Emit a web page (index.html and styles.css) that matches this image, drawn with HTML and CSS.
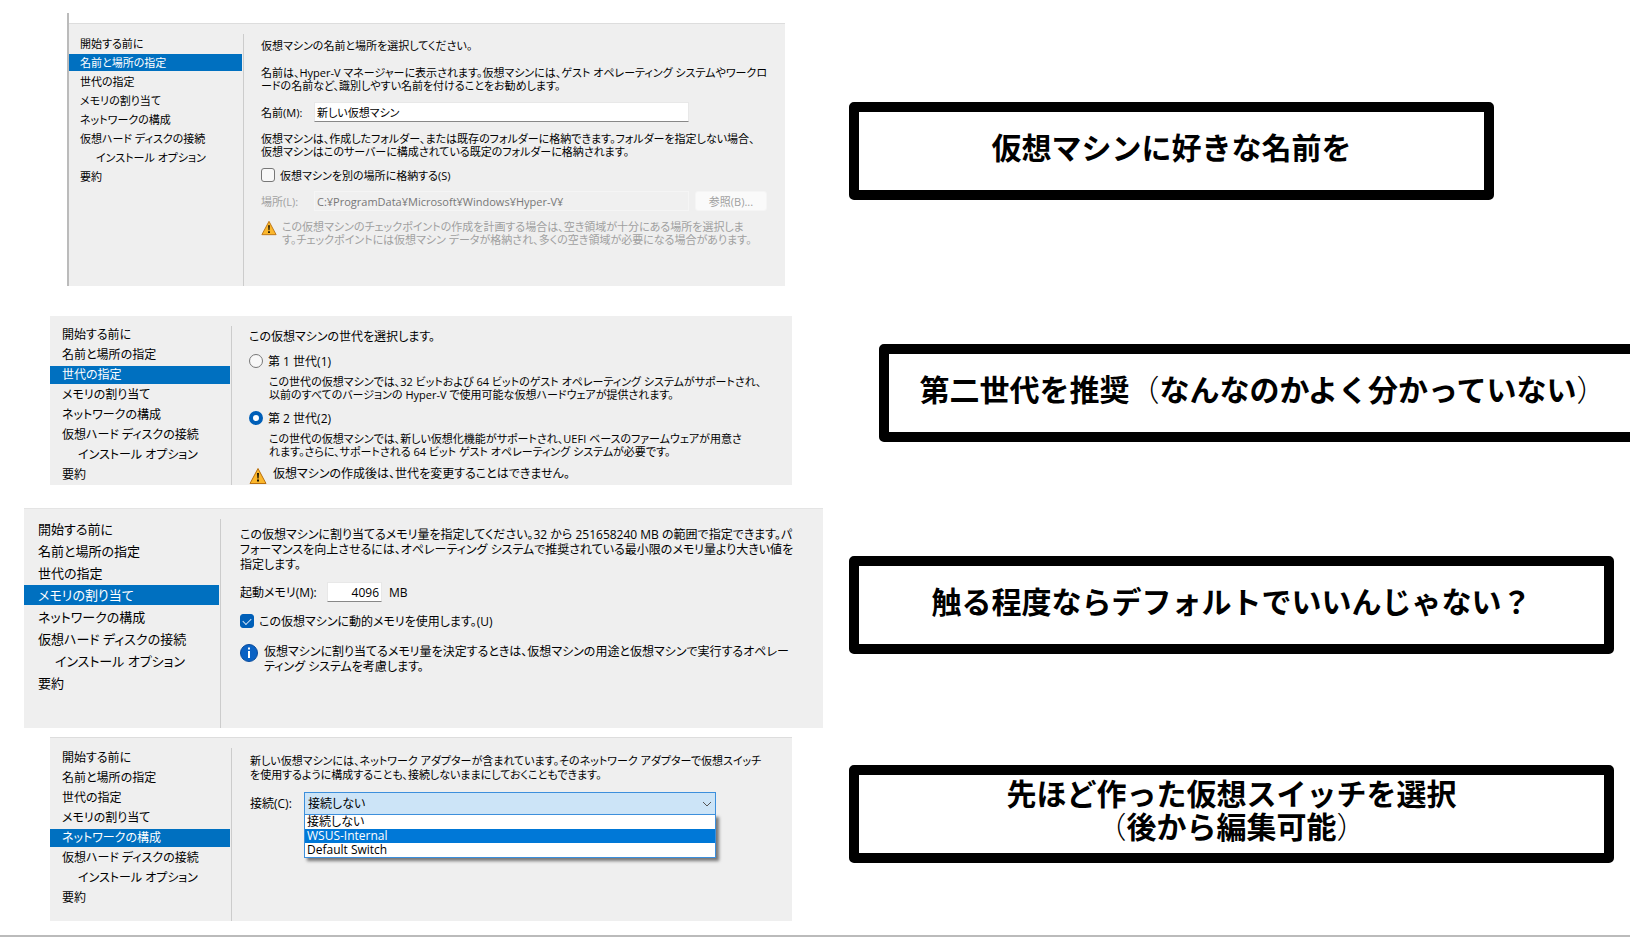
FILE: index.html
```html
<!DOCTYPE html>
<html lang="ja">
<head>
    <meta charset="UTF-8">
    <meta name="viewport" content="width=device-width, initial-scale=1.0">
    <title>仮想マシンの作成</title>
    <link rel="stylesheet" href="styles.css">
</head>
<body>
    <main class="slide">
        <!-- 名前と場所 -->
        <section class="step step-name">
            <div class="panel">
                <div class="panel-head"></div>
                <div class="wizard">
                    <nav class="nav">
                        <a href="#">開始する前に</a>
                        <a href="#" class="active">名前と場所の指定</a>
                        <a href="#">世代の指定</a>
                        <a href="#">メモリの割り当て</a>
                        <a href="#">ネットワークの構成</a>
                        <a href="#">仮想ハード ディスクの接続</a>
                        <a href="#" class="sub">インストール オプション</a>
                        <a href="#">要約</a>
                    </nav>
                    <div class="content">
                        <p>仮想マシンの名前と場所を選択してください。</p>
                        <p class="intro">名前は、Hyper-V マネージャーに表示されます。仮想マシンには、ゲスト オペレーティング システムやワークロ<br>ードの名前など、識別しやすい名前を付けることをお勧めします。</p>
                        <div class="field">
                            <label for="vmName">名前(M):</label>
                            <input type="text" id="vmName" class="text" value="新しい仮想マシン">
                        </div>
                        <p class="note">仮想マシンは、作成したフォルダー、または既存のフォルダーに格納できます。フォルダーを指定しない場合、<br>仮想マシンはこのサーバーに構成されている既定のフォルダーに格納されます。</p>
                        <div class="choice">
                            <input type="checkbox" id="otherPlace" class="check">
                            <label for="otherPlace">仮想マシンを別の場所に格納する(S)</label>
                        </div>
                        <div class="field disabled">
                            <label for="place">場所(L):</label>
                            <input type="text" id="place" class="text" value="C:¥ProgramData¥Microsoft¥Windows¥Hyper-V¥" disabled>
                            <button type="button" class="browse" disabled>参照(B)...</button>
                        </div>
                        <div class="message disabled">
                            <svg class="icon" viewBox="0 0 18 18" aria-hidden="true"><path d="M9 1.5 17 16.5H1z" fill="#fbb72c" stroke="#b9700f" stroke-linejoin="round"/><path d="M8 6h2l-.4 5.5H8.4zM8 12.6h2v2H8z" fill="#1c1400"/></svg>
                            <p>この仮想マシンのチェックポイントの作成を計画する場合は、空き領域が十分にある場所を選択しま<br>す。チェックポイントには仮想マシン データが格納され、多くの空き領域が必要になる場合があります。</p>
                        </div>
                    </div>
                </div>
            </div>
            <div class="callout">仮想マシンに好きな名前を</div>
        </section>

        <!-- 世代 -->
        <section class="step step-generation">
            <div class="panel">
                <div class="wizard">
                    <nav class="nav">
                        <a href="#">開始する前に</a>
                        <a href="#">名前と場所の指定</a>
                        <a href="#" class="active">世代の指定</a>
                        <a href="#">メモリの割り当て</a>
                        <a href="#">ネットワークの構成</a>
                        <a href="#">仮想ハード ディスクの接続</a>
                        <a href="#" class="sub">インストール オプション</a>
                        <a href="#">要約</a>
                    </nav>
                    <div class="content">
                        <p>この仮想マシンの世代を選択します。</p>
                        <div class="choice">
                            <input type="radio" name="generation" id="gen1" class="radio">
                            <label for="gen1">第 1 世代(1)</label>
                        </div>
                        <p class="detail">この世代の仮想マシンでは、32 ビットおよび 64 ビットのゲスト オペレーティング システムがサポートされ、<br>以前のすべてのバージョンの Hyper-V で使用可能な仮想ハードウェアが提供されます。</p>
                        <div class="choice">
                            <input type="radio" name="generation" id="gen2" class="radio" checked>
                            <label for="gen2">第 2 世代(2)</label>
                        </div>
                        <p class="detail">この世代の仮想マシンでは、新しい仮想化機能がサポートされ、UEFI ベースのファームウェアが用意さ<br>れます。さらに、サポートされる 64 ビット ゲスト オペレーティング システムが必要です。</p>
                        <div class="message">
                            <svg class="icon" viewBox="0 0 18 18" aria-hidden="true"><path d="M9 1.5 17 16.5H1z" fill="#fbb72c" stroke="#b9700f" stroke-linejoin="round"/><path d="M8 6h2l-.4 5.5H8.4zM8 12.6h2v2H8z" fill="#1c1400"/></svg>
                            <p>仮想マシンの作成後は、世代を変更することはできません。</p>
                        </div>
                    </div>
                </div>
            </div>
            <div class="callout">第二世代を推奨<span class="thin">（</span>なんなのかよく分かっていない<span class="thin">）</span></div>
        </section>

        <!-- メモリ -->
        <section class="step step-memory">
            <div class="panel">
                <div class="wizard">
                    <nav class="nav">
                        <a href="#">開始する前に</a>
                        <a href="#">名前と場所の指定</a>
                        <a href="#">世代の指定</a>
                        <a href="#" class="active">メモリの割り当て</a>
                        <a href="#">ネットワークの構成</a>
                        <a href="#">仮想ハード ディスクの接続</a>
                        <a href="#" class="sub">インストール オプション</a>
                        <a href="#">要約</a>
                    </nav>
                    <div class="content">
                        <p>この仮想マシンに割り当てるメモリ量を指定してください。32 から 251658240 MB の範囲で指定できます。パ<br>フォーマンスを向上させるには、オペレーティング システムで推奨されている最小限のメモリ量より大きい値を<br>指定します。</p>
                        <div class="field">
                            <label for="memory">起動メモリ(M):</label>
                            <input type="text" id="memory" class="text" value="4096">
                            <span>MB</span>
                        </div>
                        <div class="choice">
                            <input type="checkbox" id="dynamic" class="check" checked>
                            <label for="dynamic">この仮想マシンに動的メモリを使用します。(U)</label>
                        </div>
                        <div class="message">
                            <svg class="icon" viewBox="0 0 18 18" aria-hidden="true"><circle cx="9" cy="9" r="8.5" fill="#0a62c4" stroke="#0a4c9c"/><path d="M8 3.5h2v2H8zM8 7h2v7H8z" fill="#fff"/></svg>
                            <p>仮想マシンに割り当てるメモリ量を決定するときは、仮想マシンの用途と仮想マシンで実行するオペレー<br>ティング システムを考慮します。</p>
                        </div>
                    </div>
                </div>
            </div>
            <div class="callout">触る程度ならデフォルトでいいんじゃない？</div>
        </section>

        <!-- ネットワーク -->
        <section class="step step-network">
            <div class="panel">
                <div class="wizard">
                    <nav class="nav">
                        <a href="#">開始する前に</a>
                        <a href="#">名前と場所の指定</a>
                        <a href="#">世代の指定</a>
                        <a href="#">メモリの割り当て</a>
                        <a href="#" class="active">ネットワークの構成</a>
                        <a href="#">仮想ハード ディスクの接続</a>
                        <a href="#" class="sub">インストール オプション</a>
                        <a href="#">要約</a>
                    </nav>
                    <div class="content">
                        <p>新しい仮想マシンには、ネットワーク アダプターが含まれています。そのネットワーク アダプターで仮想スイッチ<br>を使用するように構成することも、接続しないままにしておくこともできます。</p>
                        <div class="field">
                            <label for="connection">接続(C):</label>
                            <div class="combo">
                                <select id="connection">
                                    <option>接続しない</option>
                                    <option>WSUS-Internal</option>
                                    <option>Default Switch</option>
                                </select>
                                <svg class="arrow" viewBox="0 0 10 6" aria-hidden="true"><path d="M1 1l4 4 4-4" fill="none" stroke="#555"/></svg>
                                <ul class="menu">
                                    <li>接続しない</li>
                                    <li class="selected">WSUS-Internal</li>
                                    <li>Default Switch</li>
                                </ul>
                            </div>
                        </div>
                    </div>
                </div>
            </div>
            <div class="callout">先ほど作った仮想スイッチを選択<br><span class="thin">（</span>後から編集可能<span class="thin">）</span></div>
        </section>
    </main>
</body>
</html>
```

FILE: styles.css
```css
* { box-sizing: border-box; }
body { margin: 0; background-color: #fff; color: #000; font-family: "Open Sans", "Noto Sans CJK JP", sans-serif; }
p, ul { margin: 0; padding: 0; }
input, button, select { font: inherit; color: inherit; font-feature-settings: inherit; margin: 0; }

.slide { padding-top: 13px; border-bottom: 2px solid #bbb; overflow: hidden; }
.step { display: grid; grid-template-columns: minmax(0, 849fr) minmax(0, 781fr); align-items: start; }

/* wizard panels */
.panel { font-size: 12px; line-height: 13px; font-feature-settings: "palt"; white-space: nowrap; }
.wizard { display: flex; background-color: #efefef; }
.nav { display: flex; flex-direction: column; flex-shrink: 0; padding-top: 9px; width: 181px; }
.nav a { margin: 1px 0; padding-left: 12px; line-height: 18px; color: #000; text-decoration: none; }
.nav a.sub { padding-left: 28px; }
.nav a.active { background-color: #0070c0; color: #fff; margin-right: 1px; }
.content { flex: 1; min-width: 0; margin-top: 10px; padding-left: 17px; border-left: 1px solid #ccc; }

.field { display: flex; align-items: center; height: 20px; margin-top: 10px; }
.text { min-width: 0; height: 20px; padding: 0 2px; border: 1px solid #e8e8e8; border-bottom-color: #888; background-color: #fff; }
.choice { display: flex; align-items: center; gap: 5px; height: 16px; margin-top: 10px; }
.message { display: flex; gap: 6px; margin-top: 9px; }
.icon { width: 18px; height: 18px; flex-shrink: 0; }
.disabled { color: #a0a0a0; }

.check { appearance: none; width: 14px; height: 14px; border: 1px solid #777; border-radius: 3px; background-color: #f8f8f8; }
.check:checked { border-color: #005fb8; background-color: #005fb8; display: grid; place-items: center; }
.check:checked::after { content: ""; width: 7px; height: 4px; border: solid #cfe3f5; border-width: 0 0 1px 1px; transform: translateY(-1px) rotate(-45deg); }
.radio { appearance: none; width: 14px; height: 14px; border: 1px solid #777; border-radius: 50%; background-color: #f8f8f8; }
.radio:checked { border: 4px solid #005fb8; background-color: #fff; }

/* name and place */
.step-name { padding-bottom: 30px; }
.step-name .panel { margin: 0 64px 0 67px; border-left: 2px solid #bbb; font-size: 11px; }
.panel-head { height: 11px; border-bottom: 1px solid #ddd; }
.step-name .nav { width: 174px; padding-top: 10px; padding-bottom: 100px; }
.step-name .nav a { padding-left: 11px; line-height: 17px; }
.step-name .nav a.sub { padding-left: 27px; }
.step-name .content { padding-top: 5px; padding-right: 18px; }
.step-name .intro { margin-top: 14px; }
.step-name .note { margin-top: 10px; }
.step-name .field label { width: 53px; }
.step-name .text { flex: 1; margin-right: 78px; }
.step-name .choice { margin-top: 9px; }
.step-name .field.disabled { margin-top: 8px; }
.step-name .disabled .text { margin-right: 6px; border-color: #f5f5f5; background-color: #f0f0f0; color: #777; }
.browse { width: 72px; height: 20px; padding: 0; border: 1px solid #f5f5f5; border-radius: 3px; background-color: #fafafa; color: #a0a0a0; }
.step-name .message { gap: 5px; }
.step-name .icon { width: 16px; height: 16px; }

/* generation */
.step-generation { padding-bottom: 23px; }
.step-generation .panel { margin: 0 57px 0 50px; }
.step-generation .content { padding-top: 4px; }
.step-generation .detail { margin-top: 6px; padding-left: 20px; font-size: 11px; }
.step-generation .detail + .choice { margin-top: 9px; }

/* memory */
.step-memory { padding-bottom: 9px; }
.step-memory .panel { margin: 0 26px 0 24px; border-top: 1px solid #e4e4e4; line-height: 15px; }
.step-memory .nav { width: 196px; padding-bottom: 34px; font-size: 13px; }
.step-memory .nav a { padding-left: 14px; line-height: 20px; }
.step-memory .nav a.sub { padding-left: 31px; }
.step-memory .content { padding-top: 8px; padding-left: 19px; }
.step-memory .field { gap: 7px; }
.step-memory .field label { width: 80px; }
.step-memory .text { width: 55px; text-align: right; }
.step-memory .choice { margin-top: 11px; }
.step-memory .message { margin-top: 15px; }

/* network */
.step-network { padding-bottom: 14px; }
.step-network .panel { margin: 0 57px 0 50px; border-top: 1px solid #ddd; line-height: 14px; }
.step-network .nav { padding-top: 10px; padding-bottom: 13px; }
.step-network .content { padding-top: 6px; padding-right: 76px; padding-left: 18px; }
.step-network .content > p { font-size: 11px; }
.step-network .field { height: 23px; }
.step-network .field label { width: 54px; }
.combo { position: relative; flex: 1; }
.combo select { appearance: none; display: block; width: 100%; height: 23px; padding: 0 3px; border: 1px solid #3c8fdc; border-radius: 0; background-color: #cce4f7; }
.arrow { position: absolute; top: 9px; right: 4px; width: 10px; height: 6px; }
.menu { position: absolute; top: 22px; left: 0; right: 0; list-style: none; border: 1px solid #3c8fdc; background-color: #fff; box-shadow: 3px 3px 3px rgba(0, 0, 0, 0.5); }
.menu li { padding: 0 2px; }
.menu .selected { background-color: #0078d7; color: #fff; }

/* callouts */
.callout { align-content: center; height: 98px; padding-bottom: 10px; border: 10px solid #000; border-radius: 5px; font-family: "Noto Sans CJK JP", sans-serif; font-size: 30px; font-weight: bold; line-height: 33px; text-align: center; white-space: nowrap; }
.thin { font-weight: 300; }
.step-name .callout { margin: 89px 136px 0 0; }
.step-generation .callout { margin: 28px -17px 0 30px; }
.step-memory .callout { margin: 48px 16px 0 0; }
.step-network .callout { margin: 28px 16px 0 0; }
```
